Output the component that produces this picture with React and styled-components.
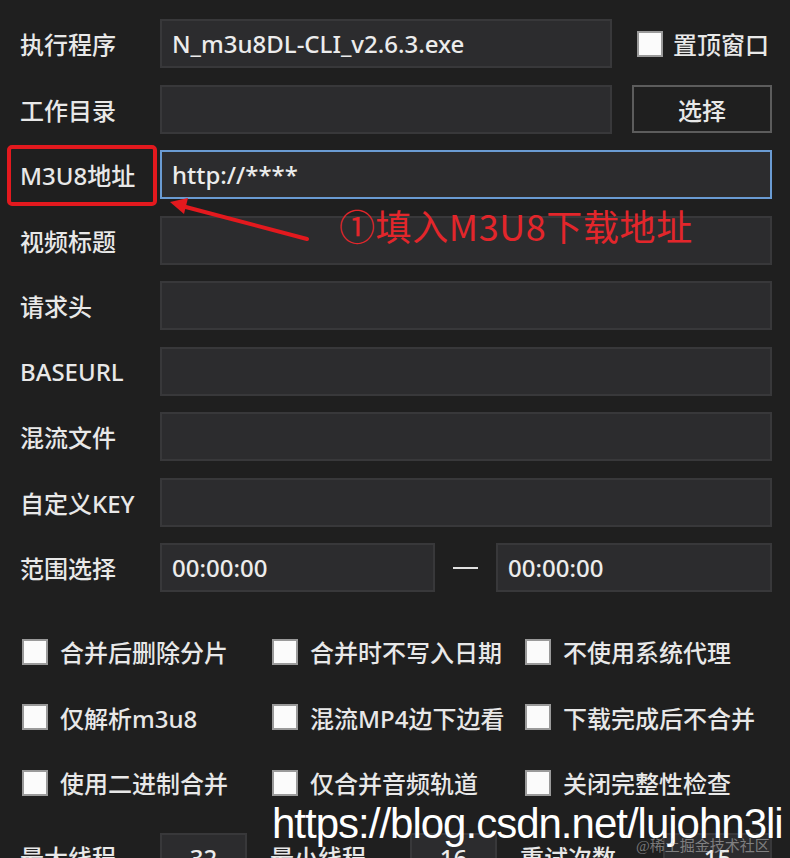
import React from "react";
import styled, { createGlobalStyle, css } from "styled-components";

const Global = createGlobalStyle`
  html, body { margin: 0; padding: 0; height: 100%; overflow: hidden; background: #1f1f1f; }
  * { box-sizing: border-box; }
`;

const FONT = `"Noto Sans", "Noto Sans CJK SC", sans-serif`;

const Page = styled.div`
  position: relative;
  width: 790px;
  height: 858px;
  overflow: hidden;
  background: #1f1f1f;
  padding: 19px 18px 0 20px;
  font-family: ${FONT};
  color: #e6e6e6;
`;

const Form = styled.div`
  display: flex;
  flex-direction: column;
  gap: 16.5px;
`;

const Row = styled.div`
  display: grid;
  grid-template-columns: 140px 1fr;
  align-items: stretch;
  height: 49px;
`;

const Label = styled.div`
  position: relative;
  display: flex;
  align-items: center;
  font-size: 24px;
  font-weight: 500;
  white-space: nowrap;
  color: #e8e8e8;
  ${(p) =>
    p.$marked &&
    css`
      &::before {
        content: "";
        position: absolute;
        left: -13px;
        right: 3px;
        top: -5px;
        bottom: -7px;
        border: 4px solid #e3191e;
        border-radius: 5px;
      }
    `}
`;

const Field = styled.div`
  display: flex;
  align-items: center;
  height: 100%;
  min-width: 0;
`;

const Input = styled.div`
  flex: ${(p) => (p.$w ? "none" : "1")};
  width: ${(p) => (p.$w ? `${p.$w}px` : "auto")};
  height: 49px;
  background: #2c2c2e;
  border: ${(p) => (p.$focus ? "2px solid #6a9bd3" : "2px solid #38383a")};
  display: flex;
  align-items: center;
  justify-content: ${(p) => (p.$center ? "center" : "flex-start")};
  padding: 0 10px;
  font-size: 24px;
  font-weight: 500;
  color: #ececec;
  white-space: nowrap;
  overflow: hidden;
`;

const Side = styled.div`
  width: 160px;
  flex: none;
  display: flex;
  align-items: center;
  justify-content: ${(p) => (p.$end ? "flex-end" : "flex-start")};
  padding-left: ${(p) => (p.$end ? 0 : 25)}px;
  gap: 10px;
`;

const Box = styled.span`
  width: 26px;
  height: 26px;
  flex: none;
  background: #fbfbfb;
  border: 2px solid #9a9a9a;
`;

const CheckText = styled.span`
  font-size: 24px;
  font-weight: 500;
  color: #e8e8e8;
  white-space: nowrap;
`;

const Button = styled.div`
  width: 140px;
  height: 48px;
  border: 2px solid #5c5c5c;
  background: #1f1f1f;
  display: flex;
  align-items: center;
  justify-content: center;
  font-size: 24px;
  font-weight: 500;
  color: #e8e8e8;
`;

const Dash = styled.div`
  width: 61px;
  flex: none;
  display: flex;
  justify-content: center;
  &::before {
    content: "";
    width: 25px;
    height: 2px;
    background: #e0e0e0;
  }
`;

const Checks = styled.div`
  margin-top: 35px;
  display: grid;
  grid-template-columns: 250px 253px 1fr;
  grid-auto-rows: 49px;
  row-gap: 16.5px;
`;

const Check = styled.div`
  display: flex;
  align-items: center;
  gap: 12px;
  padding-left: 2px;
`;

const Bottom = styled.div`
  margin-top: 25.5px;
  display: flex;
  align-items: flex-start;
  height: 49px;
`;

const BottomLabel = styled.div`
  width: ${(p) => p.$w}px;
  margin-left: ${(p) => p.$ml || 0}px;
  padding-top: 6px;
  font-size: 24px;
  font-weight: 500;
  color: #e8e8e8;
  white-space: nowrap;
`;

const Annot = styled.div`
  position: absolute;
  left: 339px;
  top: 201px;
  font-family: "Noto Sans CJK SC", sans-serif;
  font-size: 36px;
  line-height: 48px;
  letter-spacing: 0.6px;
  color: #e3262b;
  white-space: nowrap;
`;

const ArrowSvg = styled.svg`
  position: absolute;
  left: 0;
  top: 0;
  pointer-events: none;
`;

const UrlMark = styled.div`
  position: absolute;
  left: 272px;
  top: 803px;
  font-family: "Liberation Sans", Arial, sans-serif;
  font-size: 42px;
  line-height: 1;
  letter-spacing: -1px;
  color: #ffffff;
  white-space: nowrap;
`;

const SiteMark = styled.div`
  position: absolute;
  left: 636px;
  top: 834px;
  font-family: "Liberation Serif", "Noto Sans CJK SC", serif;
  font-size: 15px;
  color: rgba(210, 210, 210, 0.5);
  white-space: nowrap;
`;

const rows = ["视频标题", "请求头", "BASEURL", "混流文件", "自定义KEY"];
const checks = [
  "合并后删除分片",
  "合并时不写入日期",
  "不使用系统代理",
  "仅解析m3u8",
  "混流MP4边下边看",
  "下载完成后不合并",
  "使用二进制合并",
  "仅合并音频轨道",
  "关闭完整性检查",
];

export default function App() {
  return (
    <>
      <Global />
      <Page>
        <Form>
          <Row>
            <Label>执行程序</Label>
            <Field>
              <Input>N_m3u8DL-CLI_v2.6.3.exe</Input>
              <Side>
                <Box />
                <CheckText>置顶窗口</CheckText>
              </Side>
            </Field>
          </Row>
          <Row>
            <Label>工作目录</Label>
            <Field>
              <Input />
              <Side $end>
                <Button>选择</Button>
              </Side>
            </Field>
          </Row>
          <Row>
            <Label $marked>M3U8地址</Label>
            <Field>
              <Input $focus>http://****</Input>
            </Field>
          </Row>
          {rows.map((r) => (
            <Row key={r}>
              <Label>{r}</Label>
              <Field>
                <Input />
              </Field>
            </Row>
          ))}
          <Row>
            <Label>范围选择</Label>
            <Field>
              <Input $w={275}>00:00:00</Input>
              <Dash />
              <Input>00:00:00</Input>
            </Field>
          </Row>
        </Form>
        <Checks>
          {checks.map((c) => (
            <Check key={c}>
              <Box />
              <CheckText>{c}</CheckText>
            </Check>
          ))}
        </Checks>
        <Bottom>
          <BottomLabel $w={140}>最大线程</BottomLabel>
          <Input $w={87} $center>32</Input>
          <BottomLabel $w={140} $ml={23}>最小线程</BottomLabel>
          <Input $w={87} $center>16</Input>
          <BottomLabel $w={143} $ml={23}>重试次数</BottomLabel>
          <Input $w={109} $center>15</Input>
        </Bottom>

        <ArrowSvg width="790" height="858" viewBox="0 0 790 858">
          <line x1="307" y1="239" x2="182" y2="206" stroke="#e3191e" strokeWidth="4" strokeLinecap="round" />
          <polygon points="170,202 188,198 184,214" fill="#e3191e" />
        </ArrowSvg>
        <Annot>①填入M3U8下载地址</Annot>
        <UrlMark>https://blog.csdn.net/lujohn3li</UrlMark>
        <SiteMark>@稀土掘金技术社区</SiteMark>
      </Page>
    </>
  );
}
